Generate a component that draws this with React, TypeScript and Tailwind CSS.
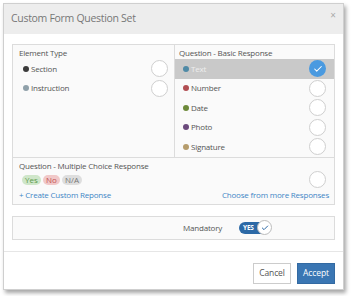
import { Check } from "lucide-react";

const basic = [
  { label: "Text", color: "bg-[#4f8aa6]", selected: true },
  { label: "Number", color: "bg-[#b14e52]" },
  { label: "Date", color: "bg-[#6d8a3a]" },
  { label: "Photo", color: "bg-[#6b4a7c]" },
  { label: "Signature", color: "bg-[#b59c6c]" },
];

const elements = [
  { label: "Section", color: "bg-[#3b3b3b]" },
  { label: "Instruction", color: "bg-[#8fa0a9]" },
];

function Radio({ checked }: { checked?: boolean }) {
  if (checked) {
    return (
      <div className="w-[17px] h-[17px] rounded-full bg-[#4a9ae0] flex items-center justify-center">
        <Check size={10} strokeWidth={2.5} className="text-white" />
      </div>
    );
  }
  return <div className="w-[17px] h-[17px] rounded-full bg-white border border-[#cfcfcf]" />;
}

export default function App() {
  return (
    <div
      className="w-[352px] h-[296px] bg-white pl-[3px] pt-[3px]"
      style={{ fontFamily: '"Open Sans", "Noto Sans", sans-serif' }}
    >
      <div className="w-[341px] h-[287px] bg-white border border-[#cfcfcf] shadow-[2px_3px_4px_rgba(0,0,0,0.35)] flex flex-col">
        <div className="h-[30px] bg-[#ededed] flex items-center justify-between pl-[7px] pr-[6px] shrink-0">
          <span className="text-[10.5px] tracking-[-0.3px] text-[#777]">Custom Form Question Set</span>
          <span className="text-[10px] text-[#aaa] self-start mt-[4px] mr-[1px]">×</span>
        </div>

        <div className="px-[8px] pt-[10px]">
          <div className="border border-[#dcdcdc] bg-[#fafafa] text-[8px] tracking-[-0.2px] text-[#555]">
            <div className="flex h-[113px] border-b border-[#dcdcdc]">
              <div className="w-[162px] border-r border-[#dcdcdc] flex flex-col">
                <div className="h-[14px] flex items-center pl-[6px] pt-[1px]">Element Type</div>
                {elements.map((e) => (
                  <div key={e.label} className="h-[19.5px] flex items-center pl-[10px] pr-[6px]">
                    <span className={`w-[6px] h-[6px] rounded-full ${e.color} mr-[2px]`} />
                    <span className="flex-1">{e.label}</span>
                    <Radio />
                  </div>
                ))}
              </div>
              <div className="flex-1 flex flex-col">
                <div className="h-[14px] flex items-center pl-[4px] pt-[1px]">Question - Basic Response</div>
                {basic.map((b) => (
                  <div
                    key={b.label}
                    className={`h-[19.5px] flex items-center pl-[8px] pr-[8px] ${b.selected ? "bg-[#c9c9c9] text-[#eeeeee]" : ""}`}
                  >
                    <span className={`w-[6px] h-[6px] rounded-full ${b.color} mr-[2px]`} />
                    <span className="flex-1">{b.label}</span>
                    <Radio checked={b.selected} />
                  </div>
                ))}
              </div>
            </div>

            <div className="h-[46px] pl-[6px] pr-[8px] pt-[2px] flex flex-col">
              <div className="h-[11px] flex items-center">Question - Multiple Choice Response</div>
              <div className="h-[17px] flex items-center justify-between">
                <div className="flex gap-[2px] ml-[3px] text-[8px] tracking-normal">
                  <span className="w-[19px] h-[10px] leading-[10px] text-center rounded-full bg-[#cfe6c9] text-[#5c9a4c]">Yes</span>
                  <span className="w-[17px] h-[10px] leading-[10px] text-center rounded-full bg-[#f1c8c8] text-[#c25252]">No</span>
                  <span className="w-[20px] h-[10px] leading-[10px] text-center rounded-full bg-[#dedede] text-[#777]">N/A</span>
                </div>
                <Radio />
              </div>
              <div className="h-[14px] flex items-center justify-between text-[#3f86c6]">
                <span>+ Create Custom Reponse</span>
                <span className="mr-[-3px]">Choose from more Responses</span>
              </div>
            </div>
          </div>

          <div className="mt-[11px] h-[24px] border border-[#dcdcdc] bg-[#fafafa] flex items-center pl-[170px] text-[8px] tracking-[-0.2px] text-[#555]">
            <span>Mandatory</span>
            <div className="ml-[17px] relative w-[32px] h-[12px] rounded-full bg-[#2c69a6] flex items-center">
              <span className="pl-[4px] text-[6.5px] font-bold text-white leading-none">YES</span>
              <div className="absolute right-[-1px] top-[-2px] w-[15px] h-[15px] rounded-full bg-white border border-[#bdbdbd] flex items-center justify-center">
                <Check size={8} strokeWidth={3} className="text-[#2c69a6]" />
              </div>
            </div>
          </div>
        </div>

        <div className="mt-[11px] border-t border-[#e6e6e6] flex-1 flex justify-end items-start pt-[11px] pr-[8px] gap-[6px] text-[8.5px] tracking-[-0.1px]">
          <button className="w-[38px] h-[21px] bg-white border border-[#cccccc] text-[#555]">Cancel</button>
          <button className="w-[38px] h-[21px] bg-[#3a76b3] border border-[#336aa2] text-white">Accept</button>
        </div>
      </div>
    </div>
  );
}
